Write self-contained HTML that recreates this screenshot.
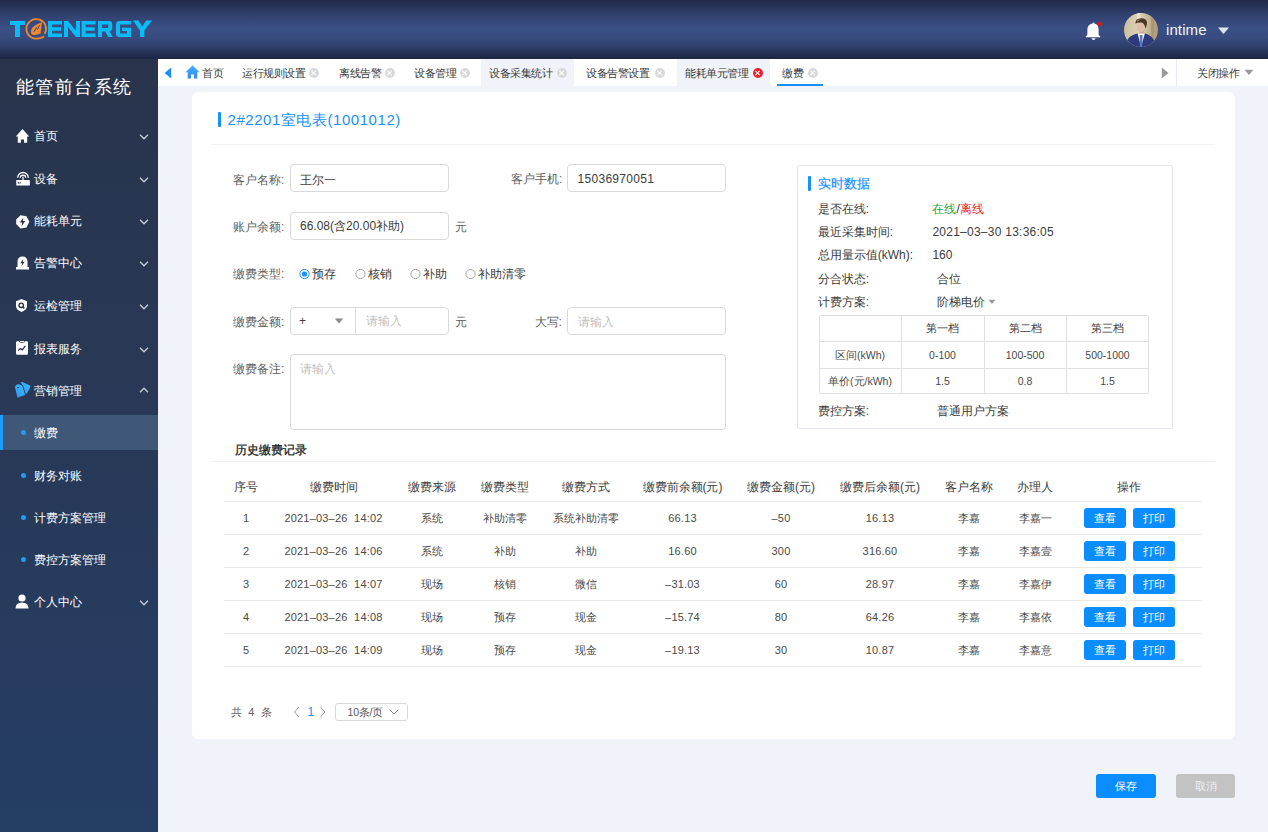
<!DOCTYPE html>
<html><head><meta charset="utf-8">
<style>
*{margin:0;padding:0;box-sizing:border-box}
html,body{width:1268px;height:832px;overflow:hidden;background:#f0f3f9;font-family:"Liberation Sans",sans-serif;color:#333;font-size:12px}
.abs{position:absolute}
.t{position:absolute;white-space:nowrap;line-height:1}
#hdr{position:absolute;left:0;top:0;width:1268px;height:59px;background:linear-gradient(#212a47 0%,#2c3a64 18%,#36497c 36%,#3a4f84 50%,#374b7f 64%,#2c3c66 82%,#1c2541 100%)}
#side{position:absolute;left:0;top:59px;width:158px;height:773px;background:linear-gradient(#29344c 0%,#283a5a 60%,#253e66 100%)}
.mi{left:34px;font-size:12px;color:#fff}
.dot{left:21px;width:5px;height:5px;border-radius:50%;background:#1e9bff}
#tabs{position:absolute;left:158px;top:59px;width:1110px;height:27px;background:#fff}
#card{position:absolute;left:192px;top:92px;width:1043px;height:648px;background:#fff;border-radius:6px}
.tb{top:8.5px;font-size:11px;letter-spacing:-0.5px;color:#3a3a3a}
.cx{top:9px;width:10px;height:10px;border-radius:50%;background:#d9d9d9}
.cx:before,.cx:after{content:"";position:absolute;left:4.4px;top:2px;width:1.2px;height:6px;background:#fff;transform:rotate(45deg)}
.cx:after{transform:rotate(-45deg)}
.cx.red{background:#e8232e}
</style></head><body>
<div id="hdr">
<svg class="abs" style="left:0;top:0" width="160" height="59" viewBox="0 0 160 59">
<g fill="#08bcfa">
<path d="M10,21H25V25H20V37H15V25H10Z"/>
<path d="M48,21H62V24.5H52V27.3H61V30.8H52V33.5H62V37H48Z"/>
<path d="M64,21H68L76,31V21H80V37H76L68,27V37H64Z"/>
<path d="M81.6,21H95.6V24.5H85.6V27.3H94.6V30.8H85.6V33.5H95.6V37H81.6Z"/>
<path fill-rule="evenodd" d="M98,21H109Q112.2,21 112.2,24V28Q112.2,31 109.5,31.2L112.8,37H108.2L105.3,31.5H102V37H98ZM102,24.5V28H108.2V24.5Z"/>
<path d="M119.5,21H131V24.5H120V33.5H127V31H122V27.8H131.2V37H119.5Q116,37 116,33.5V24.5Q116,21 119.5,21Z"/>
<path d="M133,20.5H138.3L142.2,26.5L146.3,20.5H152L144.4,30.5V37H140V30.5Z"/>
</g>
<path fill="none" stroke="#f0882c" stroke-width="1.8" d="M44.2,36.4Q41.5,38.6 36.2,38.7A9.8,9.8 0 1 1 44.7,33.8"/><path fill="#f0882c" d="M41.9,22.2L40.6,33.6Q37,35.3 33.4,35Q30.6,34.6 31,31Q31.8,27.5 34.5,25.8Q38,23.5 41.9,22.2Z"/><path fill="none" stroke="#33467c" stroke-width="1" d="M33.8,32L36.5,27.6L37.4,29.3L39.8,25"/>
</svg>
<svg class="abs" style="left:1082px;top:18.5px" width="24" height="24" viewBox="0 0 24 24">
<path fill="#fff" d="M10.5,4.5Q10.5,3.6 11.5,3.6Q12.5,3.6 12.5,4.5Q16.6,5.5 16.6,10.5V15.2Q16.8,16.6 18.2,17.3V18.3H3.8V17.3Q5.2,16.6 5.4,15.2V10.5Q5.4,5.5 10.5,4.5Z"/>
<path fill="#fff" d="M9.4,19.2H13.6Q13.2,21 11.5,21Q9.8,21 9.4,19.2Z"/>
<circle cx="18.2" cy="5" r="2.2" fill="#ee1111"/>
</svg>
<svg class="abs" style="left:1124px;top:13px" width="34" height="34" viewBox="0 0 34 34">
<defs><clipPath id="av"><circle cx="17" cy="17" r="17"/></clipPath>
<linearGradient id="avbg" x1="0" y1="0" x2="1" y2="0"><stop offset="0" stop-color="#cbbf9e"/><stop offset="0.45" stop-color="#ddd4ba"/><stop offset="1" stop-color="#ab9670"/></linearGradient></defs>
<g clip-path="url(#av)">
<rect width="34" height="34" fill="url(#avbg)"/>
<rect x="13" y="0" width="3" height="12" fill="#f1ecdc" opacity="0.7"/>
<rect x="27" y="0" width="3" height="34" fill="#9c8662" opacity="0.5"/>
<rect x="15" y="17" width="5" height="4.5" fill="#cfa88c"/>
<path d="M2,34L3.5,27Q5,23 11.5,21L14,20.5L17,30L20.5,20.5L23,21Q28,23 30,27.5L31,34Z" fill="#2d3a7c"/>
<path d="M13.6,20.6L17,34L20.9,20.6Z" fill="#f2f2f2"/>
<path d="M15.7,22H18.5L18.2,34H15.9Z" fill="#5b77c2"/>
<ellipse cx="16.8" cy="14" rx="4.2" ry="5.4" fill="#dcbfa6"/>
<path d="M11.5,10.8Q11,5.5 17,5.3Q23,5.5 23,10Q22.8,13.5 21.2,15.5Q21,10.5 17.5,9.6Q13.5,9.3 11.5,10.8Z" fill="#4a3424"/>
<path d="M12.5,8Q14,6 17.5,6.2Q15,7 13.5,8.8Z" fill="#a08c74"/>
</g>
</svg>
<div class="t" style="left:1166px;top:22px;font-size:15px;color:#f2f4f8;letter-spacing:0.1px">intime</div>
<svg class="abs" style="left:1218px;top:27px" width="11" height="8" viewBox="0 0 11 8"><path d="M0,0.5H11L5.5,7Z" fill="#dfe3ea"/></svg>
</div>
<div id="side">
<div class="t" style="left:16px;top:19px;font-size:18px;color:#fff;letter-spacing:1.4px">能管前台系统</div>
<!-- menu items: top = center - 59 -->
<svg class="abs ic" style="left:15px;top:70px" width="15" height="14" viewBox="0 0 15 14"><path fill="#fff" d="M7.5,0L14.2,7.6H12.2V13.8H9V10.6H5.9V13.8H2.8V7.6H0.8Z"/></svg>
<div class="t mi" style="top:71px">首页</div>
<svg class="abs" style="left:139px;top:75px" width="10" height="6" viewBox="0 0 10 6"><path d="M1,0.8L5,4.8L9,0.8" fill="none" stroke="#c9cdd6" stroke-width="1.3"/></svg>

<svg class="abs" style="left:15px;top:112px" width="16" height="15" viewBox="0 0 16 15"><g fill="none" stroke="#fff" stroke-width="1.3"><path d="M2.7,6.8A5.3,5.3 0 0 1 13.3,6.8"/><path d="M5.3,6.8A2.7,2.7 0 0 1 10.7,6.8"/></g><rect x="7.4" y="5.5" width="1.2" height="4" fill="#fff"/><rect x="1.25" y="9" width="13.6" height="5.5" fill="#fff" rx="0.6"/><rect x="2.8" y="10.9" width="1" height="1.8" fill="#2a354d"/><rect x="4.6" y="10.9" width="1" height="1.8" fill="#2a354d"/></svg>
<div class="t mi" style="top:114px">设备</div>
<svg class="abs" style="left:139px;top:118px" width="10" height="6" viewBox="0 0 10 6"><path d="M1,0.8L5,4.8L9,0.8" fill="none" stroke="#c9cdd6" stroke-width="1.3"/></svg>

<svg class="abs" style="left:15px;top:156px" width="15" height="15" viewBox="0 0 15 15"><path fill="#fff" d="M5.5,0.3L11.5,1.3L14.3,6.8L11.5,12.6L5.5,13.6L1.2,9L1.2,4.6Z"/><path fill="#2a354d" d="M8.3,2.6L4.8,7.6H7.2L6.5,11.4L10.2,6H7.8Z"/></svg>
<div class="t mi" style="top:156px">能耗单元</div>
<svg class="abs" style="left:139px;top:160px" width="10" height="6" viewBox="0 0 10 6"><path d="M1,0.8L5,4.8L9,0.8" fill="none" stroke="#c9cdd6" stroke-width="1.3"/></svg>

<svg class="abs" style="left:15px;top:196px" width="15" height="15" viewBox="0 0 15 15"><path fill="#fff" d="M2.5,12V7Q2.5,1.5 7.5,1.5Q12.5,1.5 12.5,7V12Z"/><rect x="1" y="12" width="13" height="2.5" fill="#fff"/><path fill="#2a354d" d="M8.2,4L5.3,8.2H7.2L6.6,11L9.7,6.8H7.8Z"/></svg>
<div class="t mi" style="top:198px">告警中心</div>
<svg class="abs" style="left:139px;top:202px" width="10" height="6" viewBox="0 0 10 6"><path d="M1,0.8L5,4.8L9,0.8" fill="none" stroke="#c9cdd6" stroke-width="1.3"/></svg>

<svg class="abs" style="left:14px;top:239.5px" width="15" height="15" viewBox="0 0 15 15"><path fill="#fff" d="M7.5,0L13,2.2V7Q13,10.8 7.5,13Q2,10.8 2,7V2.2Z"/><circle cx="7.2" cy="6.3" r="2.2" fill="none" stroke="#2a354d" stroke-width="1.4"/><path d="M8.7,7.8L10.3,9.4" stroke="#2a354d" stroke-width="1.5"/></svg>
<div class="t mi" style="top:241px">运检管理</div>
<svg class="abs" style="left:139px;top:245px" width="10" height="6" viewBox="0 0 10 6"><path d="M1,0.8L5,4.8L9,0.8" fill="none" stroke="#c9cdd6" stroke-width="1.3"/></svg>

<svg class="abs" style="left:15px;top:282px" width="14" height="15" viewBox="0 0 14 15"><path fill="#fff" d="M1,1.5Q1,0.2 2.2,0.2H4.2Q4.5,2 6.3,2H7.7Q9.5,2 9.8,0.2H11.8Q13,0.2 13,1.5V12.6Q13,13.8 11.8,13.8H2.2Q1,13.8 1,12.6Z"/><rect x="5" y="0" width="4" height="1.2" fill="#fff"/><path d="M3.2,9.6L5.3,7.6L7.3,8.9L10.3,4.9" fill="none" stroke="#2a354d" stroke-width="1.3"/></svg>
<div class="t mi" style="top:284px">报表服务</div>
<svg class="abs" style="left:139px;top:288px" width="10" height="6" viewBox="0 0 10 6"><path d="M1,0.8L5,4.8L9,0.8" fill="none" stroke="#c9cdd6" stroke-width="1.3"/></svg>

<svg class="abs" style="left:13px;top:322px" width="19" height="18" viewBox="0 0 19 18"><defs><linearGradient id="tg" x1="1" y1="0" x2="0" y2="1"><stop offset="0" stop-color="#33c4ff"/><stop offset="1" stop-color="#3a8cf4"/></linearGradient></defs><path fill="url(#tg)" d="M7.6,1.4Q8.5,0.8 9.5,1.1L16.8,4.4Q17.8,5 17.3,6L14,12.2L12.3,12.9L9.8,4.6Z"/><path fill="url(#tg)" stroke="#29344c" stroke-width="0.8" d="M1.6,6.7Q1.5,5 2.6,4.2L4.2,3.1Q5,2.6 6,2.9L8.6,3.9Q9.4,4.3 9.7,5.1L12.4,13.3Q12.6,14.3 11.7,14.6L5.1,16.9Q4.2,17.2 3.9,16.3Z"/><ellipse cx="5" cy="6.5" rx="0.9" ry="0.6" fill="#29344c"/></svg>
<div class="t mi" style="top:326px">营销管理</div>
<svg class="abs" style="left:138.5px;top:328px" width="10" height="6" viewBox="0 0 10 6"><path d="M1,5.2L5,1.2L9,5.2" fill="none" stroke="#c9cdd6" stroke-width="1.3"/></svg>

<div class="abs" style="left:0;top:356px;width:158px;height:35px;background:#405877"></div>
<div class="abs" style="left:0;top:356px;width:3px;height:35px;background:#1e9bff"></div>
<div class="abs dot" style="top:371px"></div>
<div class="t mi" style="top:368px">缴费</div>
<div class="abs dot" style="top:414px"></div>
<div class="t mi" style="top:411px">财务对账</div>
<div class="abs dot" style="top:456px"></div>
<div class="t mi" style="top:453px">计费方案管理</div>
<div class="abs dot" style="top:498px"></div>
<div class="t mi" style="top:495px">费控方案管理</div>

<svg class="abs" style="left:15px;top:535px" width="14" height="15" viewBox="0 0 14 15"><circle cx="7" cy="4" r="3.6" fill="#fff"/><path fill="#fff" d="M0.5,14.5Q0.5,8.5 7,8.5Q13.5,8.5 13.5,14.5Z"/></svg>
<div class="t mi" style="top:537px">个人中心</div>
<svg class="abs" style="left:139px;top:541px" width="10" height="6" viewBox="0 0 10 6"><path d="M1,0.8L5,4.8L9,0.8" fill="none" stroke="#c9cdd6" stroke-width="1.3"/></svg>
</div>
<div id="tabs">
<div class="abs" style="left:323px;top:0;width:93px;height:27px;background:#f0f3f9"></div>
<div class="abs" style="left:519px;top:0;width:93px;height:27px;background:#f0f3f9"></div>
<svg class="abs" style="left:6px;top:8px" width="8" height="12" viewBox="0 0 8 12"><path d="M7.2,0.5V11.5L0.5,6Z" fill="#1890ff"/></svg>
<svg class="abs" style="left:27px;top:6px" width="15" height="14" viewBox="0 0 15 14"><defs><linearGradient id="hg" x1="0" y1="0" x2="0" y2="1"><stop offset="0" stop-color="#3cb3ff"/><stop offset="1" stop-color="#3a86f3"/></linearGradient></defs><path fill="url(#hg)" d="M7.5,0.5L14.5,7.2H12.3V13.5H9V9.5H6V13.5H2.7V7.2H0.5Z"/></svg>
<div class="t tb" style="left:44px">首页</div>
<div class="t tb" style="left:84px">运行规则设置</div><div class="abs cx" style="left:151px"></div>
<div class="t tb" style="left:181px">离线告警</div><div class="abs cx" style="left:227px"></div>
<div class="t tb" style="left:256px">设备管理</div><div class="abs cx" style="left:302px"></div>
<div class="t tb" style="left:331px">设备采集统计</div><div class="abs cx" style="left:399px"></div>
<div class="t tb" style="left:428px">设备告警设置</div><div class="abs cx" style="left:497px"></div>
<div class="t tb" style="left:527px">能耗单元管理</div><div class="abs cx red" style="left:595px"></div>
<div class="t tb" style="left:624px">缴费</div><div class="abs cx" style="left:650px"></div>
<div class="abs" style="left:619px;top:25px;width:46px;height:2px;background:#1890ff"></div>
<svg class="abs" style="left:1003px;top:8px" width="8" height="12" viewBox="0 0 8 12"><path d="M0.8,0.5V11.5L7.5,6Z" fill="#999"/></svg>
<div class="abs" style="left:1018px;top:0;width:1px;height:27px;background:#e9edf3"></div>
<div class="t tb" style="left:1039px">关闭操作</div>
<svg class="abs" style="left:1086px;top:10px" width="10" height="7" viewBox="0 0 10 7"><path d="M0.5,0.8H9.5L5,6Z" fill="#999"/></svg>
</div>
<div class="abs" style="left:192px;top:92px;width:1043px;height:647px;background:#fff;border-radius:6px"></div>
<div class="abs" style="left:218px;top:112px;width:3px;height:15px;background:#1890ff;border-radius:1px"></div>
<div class="t" style="left:227.5px;top:112.0px;font-size:15px;color:#1890ff;letter-spacing:0.55px">2#2201室电表(1001012)</div>
<div class="abs" style="left:211px;top:144px;width:1004px;height:1px;background:#f0f2f5"></div>
<div class="t" style="left:233px;top:174.0px;font-size:12px;color:#5e5e5e;">客户名称:</div>
<div class="abs" style="left:290px;top:164px;width:159px;height:28px;border:1px solid #d9d9d9;border-radius:4px;background:#fff"></div>
<div class="t" style="left:300px;top:173.5px;font-size:12px;color:#3c3c3c;">王尔一</div>
<div class="t" style="left:511px;top:173.0px;font-size:12px;color:#5e5e5e;">客户手机:</div>
<div class="abs" style="left:567px;top:164px;width:159px;height:28px;border:1px solid #d9d9d9;border-radius:4px;background:#fff"></div>
<div class="t" style="left:577.5px;top:173.0px;font-size:12px;color:#3c3c3c;letter-spacing:0.3px">15036970051</div>
<div class="t" style="left:233px;top:221.0px;font-size:12px;color:#5e5e5e;">账户余额:</div>
<div class="abs" style="left:290px;top:212px;width:159px;height:28px;border:1px solid #d9d9d9;border-radius:4px;background:#fff"></div>
<div class="t" style="left:300px;top:220.0px;font-size:12px;color:#3c3c3c;">66.08(含20.00补助)</div>
<div class="t" style="left:455px;top:220.5px;font-size:12px;color:#5e5e5e;">元</div>
<div class="t" style="left:233px;top:268.0px;font-size:12px;color:#5e5e5e;">缴费类型:</div>
<svg class="abs" style="left:299px;top:268px" width="12" height="12" viewBox="0 0 12 12"><circle cx="5.5" cy="6" r="4.6" fill="#fff" stroke="#1890ff" stroke-width="1"/><circle cx="5.5" cy="6" r="2.6" fill="#1890ff"/></svg>
<svg class="abs" style="left:354.5px;top:268px" width="12" height="12" viewBox="0 0 12 12"><circle cx="5.5" cy="6" r="4.6" fill="#fff" stroke="#9a9a9a" stroke-width="0.9"/></svg>
<svg class="abs" style="left:410.3px;top:268px" width="12" height="12" viewBox="0 0 12 12"><circle cx="5.5" cy="6" r="4.6" fill="#fff" stroke="#9a9a9a" stroke-width="0.9"/></svg>
<svg class="abs" style="left:465.3px;top:268px" width="12" height="12" viewBox="0 0 12 12"><circle cx="5.5" cy="6" r="4.6" fill="#fff" stroke="#9a9a9a" stroke-width="0.9"/></svg>
<div class="t" style="left:312px;top:268.0px;font-size:12px;color:#3c3c3c;">预存</div>
<div class="t" style="left:368px;top:268.0px;font-size:12px;color:#3c3c3c;">核销</div>
<div class="t" style="left:423px;top:268.0px;font-size:12px;color:#3c3c3c;">补助</div>
<div class="t" style="left:478px;top:268.0px;font-size:12px;color:#3c3c3c;">补助清零</div>
<div class="t" style="left:233px;top:315.5px;font-size:12px;color:#5e5e5e;">缴费金额:</div>
<div class="abs" style="left:290px;top:307px;width:159px;height:28px;border:1px solid #d9d9d9;border-radius:4px;background:#fff"></div>
<div class="abs" style="left:355px;top:308px;width:1px;height:26px;background:#d9d9d9"></div>
<div class="t" style="left:299px;top:315.0px;font-size:12px;color:#3c3c3c;">+</div>
<svg class="abs" style="left:334px;top:318px" width="10" height="6" viewBox="0 0 10 6"><path d="M0.8,0.5H9.2L5,5.5Z" fill="#8a8a8a"/></svg>
<div class="t" style="left:366px;top:315.0px;font-size:12px;color:#bfbfbf;">请输入</div>
<div class="t" style="left:455px;top:315.5px;font-size:12px;color:#5e5e5e;">元</div>
<div class="t" style="left:534.5px;top:315.5px;font-size:12px;color:#5e5e5e;">大写:</div>
<div class="abs" style="left:567px;top:307px;width:159px;height:28px;border:1px solid #d9d9d9;border-radius:4px;background:#fff"></div>
<div class="t" style="left:577.5px;top:315.5px;font-size:12px;color:#bfbfbf;">请输入</div>
<div class="t" style="left:233px;top:362.5px;font-size:12px;color:#5e5e5e;">缴费备注:</div>
<div class="abs" style="left:290px;top:354px;width:436px;height:76px;border:1px solid #d9d9d9;border-radius:4px;background:#fff"></div>
<div class="t" style="left:300px;top:362.5px;font-size:12px;color:#bfbfbf;">请输入</div>
<div class="abs" style="left:797px;top:165px;width:376px;height:264px;border:1px solid #e4e7ed;border-radius:2px"></div>
<div class="abs" style="left:808px;top:176px;width:3px;height:15px;background:#1890ff;border-radius:1px"></div>
<div class="t" style="left:817.5px;top:177.0px;font-size:13px;color:#1890ff;-webkit-text-stroke:0.2px #1890ff">实时数据</div>
<div class="t" style="left:817.8px;top:202.5px;font-size:12px;color:#3c3c3c;">是否在线:</div>
<div class="t" style="left:817.8px;top:226.0px;font-size:12px;color:#3c3c3c;">最近采集时间:</div>
<div class="t" style="left:817.8px;top:249.0px;font-size:12px;color:#3c3c3c;">总用量示值(kWh):</div>
<div class="t" style="left:817.8px;top:273.0px;font-size:12px;color:#3c3c3c;">分合状态:</div>
<div class="t" style="left:817.8px;top:295.7px;font-size:12px;color:#3c3c3c;">计费方案:</div>
<div class="t" style="left:817.8px;top:405.0px;font-size:12px;color:#3c3c3c;">费控方案:</div>
<div class="t" style="left:932.4px;top:202.5px;font-size:12px;color:#3c3c3c;"><span style="color:#23a344">在线</span><span style="color:#333">/</span><span style="color:#e8262d">离线</span></div>
<div class="t" style="left:932.4px;top:226.0px;font-size:12px;color:#3c3c3c;letter-spacing:0.25px">2021–03–30 13:36:05</div>
<div class="t" style="left:932.4px;top:249.0px;font-size:12px;color:#3c3c3c;">160</div>
<div class="t" style="left:936.7px;top:273.0px;font-size:12px;color:#3c3c3c;">合位</div>
<div class="t" style="left:936.7px;top:295.7px;font-size:12px;color:#3c3c3c;">阶梯电价</div>
<svg class="abs" style="left:988px;top:299px" width="8" height="6" viewBox="0 0 8 6"><path d="M0.5,0.8H7.5L4,5Z" fill="#999"/></svg>
<div class="t" style="left:936.7px;top:405.0px;font-size:12px;color:#3c3c3c;">普通用户方案</div>
<div class="abs" style="left:819px;top:315px;width:330px;height:79px;border:1px solid #e0e0e0;border-radius:2px"></div>
<div class="abs" style="left:901px;top:316px;width:1px;height:77px;background:#e0e0e0"></div>
<div class="abs" style="left:984px;top:316px;width:1px;height:77px;background:#e0e0e0"></div>
<div class="abs" style="left:1066px;top:316px;width:1px;height:77px;background:#e0e0e0"></div>
<div class="abs" style="left:820px;top:341px;width:328px;height:1px;background:#e0e0e0"></div>
<div class="abs" style="left:820px;top:368px;width:328px;height:1px;background:#e0e0e0"></div>
<div class="t" style="left:902.5px;width:80px;text-align:center;top:323.0px;font-size:11px;color:#3c3c3c;">第一档</div>
<div class="t" style="left:985.0px;width:80px;text-align:center;top:323.0px;font-size:11px;color:#3c3c3c;">第二档</div>
<div class="t" style="left:1067.5px;width:80px;text-align:center;top:323.0px;font-size:11px;color:#3c3c3c;">第三档</div>
<div class="t" style="left:820.0px;width:80px;text-align:center;top:349.6px;font-size:10.5px;color:#4a4a4a;">区间(kWh)</div>
<div class="t" style="left:902.5px;width:80px;text-align:center;top:349.6px;font-size:10.5px;color:#4a4a4a;">0-100</div>
<div class="t" style="left:985.0px;width:80px;text-align:center;top:349.6px;font-size:10.5px;color:#4a4a4a;">100-500</div>
<div class="t" style="left:1067.5px;width:80px;text-align:center;top:349.6px;font-size:10.5px;color:#4a4a4a;">500-1000</div>
<div class="t" style="left:820.0px;width:80px;text-align:center;top:376.2px;font-size:10.5px;color:#4a4a4a;">单价(元/kWh)</div>
<div class="t" style="left:902.5px;width:80px;text-align:center;top:376.2px;font-size:10.5px;color:#4a4a4a;">1.5</div>
<div class="t" style="left:985.0px;width:80px;text-align:center;top:376.2px;font-size:10.5px;color:#4a4a4a;">0.8</div>
<div class="t" style="left:1067.5px;width:80px;text-align:center;top:376.2px;font-size:10.5px;color:#4a4a4a;">1.5</div>
<div class="t" style="left:234.6px;top:444.0px;font-size:12px;color:#222;-webkit-text-stroke:0.3px #222">历史缴费记录</div>
<div class="abs" style="left:211px;top:461px;width:1004px;height:1px;background:#f0f2f5"></div>
<div class="t" style="left:191.0px;width:110px;text-align:center;top:481.0px;font-size:12px;color:#3c3c3c;">序号</div>
<div class="t" style="left:278.5px;width:110px;text-align:center;top:481.0px;font-size:12px;color:#3c3c3c;">缴费时间</div>
<div class="t" style="left:377.4px;width:110px;text-align:center;top:481.0px;font-size:12px;color:#3c3c3c;">缴费来源</div>
<div class="t" style="left:449.8px;width:110px;text-align:center;top:481.0px;font-size:12px;color:#3c3c3c;">缴费类型</div>
<div class="t" style="left:531.0px;width:110px;text-align:center;top:481.0px;font-size:12px;color:#3c3c3c;">缴费方式</div>
<div class="t" style="left:627.5px;width:110px;text-align:center;top:481.0px;font-size:12px;color:#3c3c3c;">缴费前余额(元)</div>
<div class="t" style="left:726.0px;width:110px;text-align:center;top:481.0px;font-size:12px;color:#3c3c3c;">缴费金额(元)</div>
<div class="t" style="left:825.0px;width:110px;text-align:center;top:481.0px;font-size:12px;color:#3c3c3c;">缴费后余额(元)</div>
<div class="t" style="left:913.5px;width:110px;text-align:center;top:481.0px;font-size:12px;color:#3c3c3c;">客户名称</div>
<div class="t" style="left:980.3px;width:110px;text-align:center;top:481.0px;font-size:12px;color:#3c3c3c;">办理人</div>
<div class="t" style="left:1074.3px;width:110px;text-align:center;top:481.0px;font-size:12px;color:#3c3c3c;">操作</div>
<div class="abs" style="left:224px;top:501px;width:978px;height:1px;background:#e9e9e9"></div>
<div class="abs" style="left:224px;top:534px;width:978px;height:1px;background:#e9e9e9"></div>
<div class="abs" style="left:224px;top:567px;width:978px;height:1px;background:#e9e9e9"></div>
<div class="abs" style="left:224px;top:600px;width:978px;height:1px;background:#e9e9e9"></div>
<div class="abs" style="left:224px;top:633px;width:978px;height:1px;background:#e9e9e9"></div>
<div class="abs" style="left:224px;top:666px;width:978px;height:1px;background:#e9e9e9"></div>
<div class="t" style="left:186.0px;width:120px;text-align:center;top:512.7px;font-size:11px;color:#4a4a4a;">1</div>
<div class="t" style="left:273.5px;width:120px;text-align:center;top:512.7px;font-size:11px;color:#4a4a4a;letter-spacing:0.2px">2021–03–26&nbsp;&nbsp;14:02</div>
<div class="t" style="left:372.4px;width:120px;text-align:center;top:512.7px;font-size:11px;color:#4a4a4a;">系统</div>
<div class="t" style="left:444.8px;width:120px;text-align:center;top:512.7px;font-size:11px;color:#4a4a4a;">补助清零</div>
<div class="t" style="left:526.0px;width:120px;text-align:center;top:512.7px;font-size:11px;color:#4a4a4a;">系统补助清零</div>
<div class="t" style="left:622.5px;width:120px;text-align:center;top:512.7px;font-size:11px;color:#4a4a4a;letter-spacing:0.2px">66.13</div>
<div class="t" style="left:721.0px;width:120px;text-align:center;top:512.7px;font-size:11px;color:#4a4a4a;letter-spacing:0.2px">–50</div>
<div class="t" style="left:820.0px;width:120px;text-align:center;top:512.7px;font-size:11px;color:#4a4a4a;letter-spacing:0.2px">16.13</div>
<div class="t" style="left:908.5px;width:120px;text-align:center;top:512.7px;font-size:11px;color:#4a4a4a;">李嘉</div>
<div class="t" style="left:975.3px;width:120px;text-align:center;top:512.7px;font-size:11px;color:#4a4a4a;">李嘉一</div>
<div class="abs" style="left:1084px;top:508px;width:42px;height:20px;background:#0a8dff;border-radius:3px"></div>
<div class="t" style="left:1085.0px;width:40px;text-align:center;top:513.0px;font-size:10.5px;color:#fff;">查看</div>
<div class="abs" style="left:1133px;top:508px;width:42px;height:20px;background:#0a8dff;border-radius:3px"></div>
<div class="t" style="left:1134.0px;width:40px;text-align:center;top:513.0px;font-size:10.5px;color:#fff;">打印</div>
<div class="t" style="left:186.0px;width:120px;text-align:center;top:545.7px;font-size:11px;color:#4a4a4a;">2</div>
<div class="t" style="left:273.5px;width:120px;text-align:center;top:545.7px;font-size:11px;color:#4a4a4a;letter-spacing:0.2px">2021–03–26&nbsp;&nbsp;14:06</div>
<div class="t" style="left:372.4px;width:120px;text-align:center;top:545.7px;font-size:11px;color:#4a4a4a;">系统</div>
<div class="t" style="left:444.8px;width:120px;text-align:center;top:545.7px;font-size:11px;color:#4a4a4a;">补助</div>
<div class="t" style="left:526.0px;width:120px;text-align:center;top:545.7px;font-size:11px;color:#4a4a4a;">补助</div>
<div class="t" style="left:622.5px;width:120px;text-align:center;top:545.7px;font-size:11px;color:#4a4a4a;letter-spacing:0.2px">16.60</div>
<div class="t" style="left:721.0px;width:120px;text-align:center;top:545.7px;font-size:11px;color:#4a4a4a;letter-spacing:0.2px">300</div>
<div class="t" style="left:820.0px;width:120px;text-align:center;top:545.7px;font-size:11px;color:#4a4a4a;letter-spacing:0.2px">316.60</div>
<div class="t" style="left:908.5px;width:120px;text-align:center;top:545.7px;font-size:11px;color:#4a4a4a;">李嘉</div>
<div class="t" style="left:975.3px;width:120px;text-align:center;top:545.7px;font-size:11px;color:#4a4a4a;">李嘉壹</div>
<div class="abs" style="left:1084px;top:541px;width:42px;height:20px;background:#0a8dff;border-radius:3px"></div>
<div class="t" style="left:1085.0px;width:40px;text-align:center;top:546.0px;font-size:10.5px;color:#fff;">查看</div>
<div class="abs" style="left:1133px;top:541px;width:42px;height:20px;background:#0a8dff;border-radius:3px"></div>
<div class="t" style="left:1134.0px;width:40px;text-align:center;top:546.0px;font-size:10.5px;color:#fff;">打印</div>
<div class="t" style="left:186.0px;width:120px;text-align:center;top:578.7px;font-size:11px;color:#4a4a4a;">3</div>
<div class="t" style="left:273.5px;width:120px;text-align:center;top:578.7px;font-size:11px;color:#4a4a4a;letter-spacing:0.2px">2021–03–26&nbsp;&nbsp;14:07</div>
<div class="t" style="left:372.4px;width:120px;text-align:center;top:578.7px;font-size:11px;color:#4a4a4a;">现场</div>
<div class="t" style="left:444.8px;width:120px;text-align:center;top:578.7px;font-size:11px;color:#4a4a4a;">核销</div>
<div class="t" style="left:526.0px;width:120px;text-align:center;top:578.7px;font-size:11px;color:#4a4a4a;">微信</div>
<div class="t" style="left:622.5px;width:120px;text-align:center;top:578.7px;font-size:11px;color:#4a4a4a;letter-spacing:0.2px">–31.03</div>
<div class="t" style="left:721.0px;width:120px;text-align:center;top:578.7px;font-size:11px;color:#4a4a4a;letter-spacing:0.2px">60</div>
<div class="t" style="left:820.0px;width:120px;text-align:center;top:578.7px;font-size:11px;color:#4a4a4a;letter-spacing:0.2px">28.97</div>
<div class="t" style="left:908.5px;width:120px;text-align:center;top:578.7px;font-size:11px;color:#4a4a4a;">李嘉</div>
<div class="t" style="left:975.3px;width:120px;text-align:center;top:578.7px;font-size:11px;color:#4a4a4a;">李嘉伊</div>
<div class="abs" style="left:1084px;top:574px;width:42px;height:20px;background:#0a8dff;border-radius:3px"></div>
<div class="t" style="left:1085.0px;width:40px;text-align:center;top:579.0px;font-size:10.5px;color:#fff;">查看</div>
<div class="abs" style="left:1133px;top:574px;width:42px;height:20px;background:#0a8dff;border-radius:3px"></div>
<div class="t" style="left:1134.0px;width:40px;text-align:center;top:579.0px;font-size:10.5px;color:#fff;">打印</div>
<div class="t" style="left:186.0px;width:120px;text-align:center;top:611.7px;font-size:11px;color:#4a4a4a;">4</div>
<div class="t" style="left:273.5px;width:120px;text-align:center;top:611.7px;font-size:11px;color:#4a4a4a;letter-spacing:0.2px">2021–03–26&nbsp;&nbsp;14:08</div>
<div class="t" style="left:372.4px;width:120px;text-align:center;top:611.7px;font-size:11px;color:#4a4a4a;">现场</div>
<div class="t" style="left:444.8px;width:120px;text-align:center;top:611.7px;font-size:11px;color:#4a4a4a;">预存</div>
<div class="t" style="left:526.0px;width:120px;text-align:center;top:611.7px;font-size:11px;color:#4a4a4a;">现金</div>
<div class="t" style="left:622.5px;width:120px;text-align:center;top:611.7px;font-size:11px;color:#4a4a4a;letter-spacing:0.2px">–15.74</div>
<div class="t" style="left:721.0px;width:120px;text-align:center;top:611.7px;font-size:11px;color:#4a4a4a;letter-spacing:0.2px">80</div>
<div class="t" style="left:820.0px;width:120px;text-align:center;top:611.7px;font-size:11px;color:#4a4a4a;letter-spacing:0.2px">64.26</div>
<div class="t" style="left:908.5px;width:120px;text-align:center;top:611.7px;font-size:11px;color:#4a4a4a;">李嘉</div>
<div class="t" style="left:975.3px;width:120px;text-align:center;top:611.7px;font-size:11px;color:#4a4a4a;">李嘉依</div>
<div class="abs" style="left:1084px;top:607px;width:42px;height:20px;background:#0a8dff;border-radius:3px"></div>
<div class="t" style="left:1085.0px;width:40px;text-align:center;top:612.0px;font-size:10.5px;color:#fff;">查看</div>
<div class="abs" style="left:1133px;top:607px;width:42px;height:20px;background:#0a8dff;border-radius:3px"></div>
<div class="t" style="left:1134.0px;width:40px;text-align:center;top:612.0px;font-size:10.5px;color:#fff;">打印</div>
<div class="t" style="left:186.0px;width:120px;text-align:center;top:644.7px;font-size:11px;color:#4a4a4a;">5</div>
<div class="t" style="left:273.5px;width:120px;text-align:center;top:644.7px;font-size:11px;color:#4a4a4a;letter-spacing:0.2px">2021–03–26&nbsp;&nbsp;14:09</div>
<div class="t" style="left:372.4px;width:120px;text-align:center;top:644.7px;font-size:11px;color:#4a4a4a;">现场</div>
<div class="t" style="left:444.8px;width:120px;text-align:center;top:644.7px;font-size:11px;color:#4a4a4a;">预存</div>
<div class="t" style="left:526.0px;width:120px;text-align:center;top:644.7px;font-size:11px;color:#4a4a4a;">现金</div>
<div class="t" style="left:622.5px;width:120px;text-align:center;top:644.7px;font-size:11px;color:#4a4a4a;letter-spacing:0.2px">–19.13</div>
<div class="t" style="left:721.0px;width:120px;text-align:center;top:644.7px;font-size:11px;color:#4a4a4a;letter-spacing:0.2px">30</div>
<div class="t" style="left:820.0px;width:120px;text-align:center;top:644.7px;font-size:11px;color:#4a4a4a;letter-spacing:0.2px">10.87</div>
<div class="t" style="left:908.5px;width:120px;text-align:center;top:644.7px;font-size:11px;color:#4a4a4a;">李嘉</div>
<div class="t" style="left:975.3px;width:120px;text-align:center;top:644.7px;font-size:11px;color:#4a4a4a;">李嘉意</div>
<div class="abs" style="left:1084px;top:640px;width:42px;height:20px;background:#0a8dff;border-radius:3px"></div>
<div class="t" style="left:1085.0px;width:40px;text-align:center;top:645.0px;font-size:10.5px;color:#fff;">查看</div>
<div class="abs" style="left:1133px;top:640px;width:42px;height:20px;background:#0a8dff;border-radius:3px"></div>
<div class="t" style="left:1134.0px;width:40px;text-align:center;top:645.0px;font-size:10.5px;color:#fff;">打印</div>
<div class="t" style="left:231px;top:706.5px;font-size:11px;color:#606060;letter-spacing:1.6px">共&nbsp;4&nbsp;条</div>
<svg class="abs" style="left:293px;top:706px" width="8" height="12" viewBox="0 0 8 12"><path d="M6,1L1.5,6L6,11" fill="none" stroke="#999" stroke-width="1"/></svg>
<div class="t" style="left:307.5px;top:705.5px;font-size:12px;color:#1890ff;">1</div>
<svg class="abs" style="left:319px;top:706px" width="8" height="12" viewBox="0 0 8 12"><path d="M1.5,1L6,6L1.5,11" fill="none" stroke="#999" stroke-width="1"/></svg>
<div class="abs" style="left:335px;top:703px;width:73px;height:18px;border:1px solid #d9d9d9;border-radius:3px"></div>
<div class="t" style="left:347.5px;top:706.8px;font-size:10.5px;color:#555;letter-spacing:-0.2px">10条/页</div>
<svg class="abs" style="left:389px;top:709px" width="10" height="6" viewBox="0 0 10 6"><path d="M0.8,0.8L5,5L9.2,0.8" fill="none" stroke="#888" stroke-width="1"/></svg>
<div class="abs" style="left:1096px;top:774px;width:60px;height:24px;background:#0a8dff;border-radius:3px"></div>
<div class="t" style="left:1096.0px;width:60px;text-align:center;top:780.5px;font-size:11px;color:#fff;">保存</div>
<div class="abs" style="left:1176px;top:774px;width:59px;height:24px;background:#c3c3c3;border-radius:3px"></div>
<div class="t" style="left:1175.5px;width:60px;text-align:center;top:780.5px;font-size:11px;color:#f0f0f0;">取消</div>
</body></html>
